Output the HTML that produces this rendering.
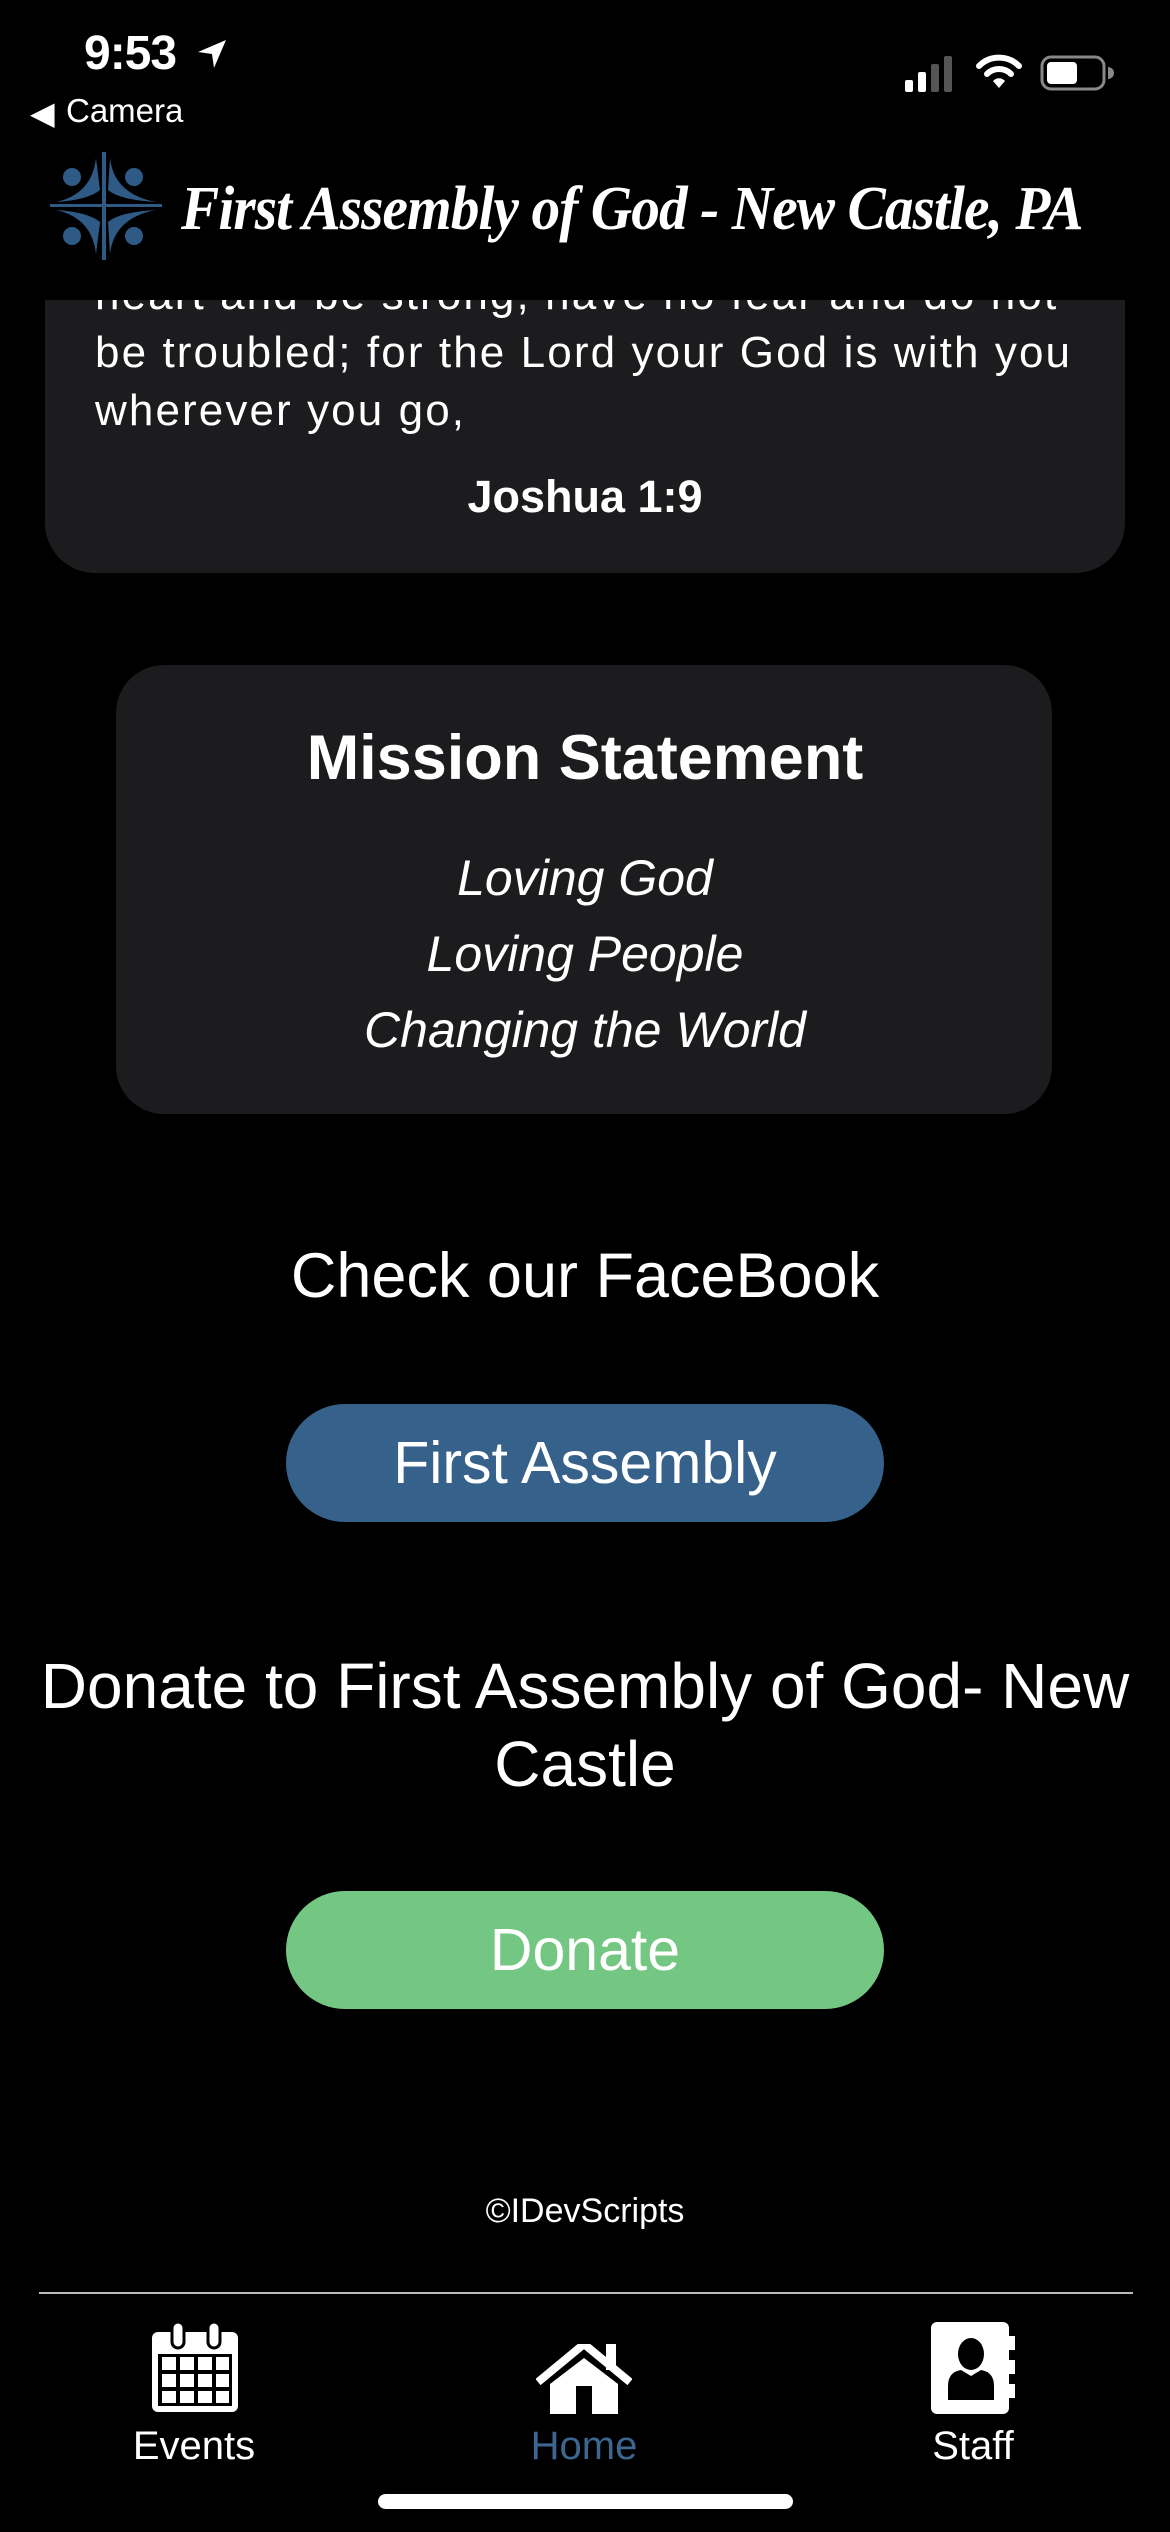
<!DOCTYPE html>
<html><head><meta charset="utf-8"><style>
*{margin:0;padding:0;box-sizing:border-box}
body{width:1170px;height:2532px;background:#000;color:#fff;font-family:"Liberation Sans",sans-serif;position:relative;overflow:hidden}
.a{position:absolute}
.c{position:absolute;left:0;width:1170px;text-align:center}
</style></head><body>
<div class="a" style="left:45px;top:200px;width:1080px;height:373px;background:#1c1c1e;border-radius:0 0 50px 50px"></div>
<div class="a" style="left:95px;top:266px;font-size:44px;line-height:58px;width:1060px;letter-spacing:2.1px;white-space:nowrap">heart and be strong; have no fear and do not<br>be troubled; for the Lord your God is with you<br>wherever you go,</div>
<div class="c" style="top:470px;font-size:45px;font-weight:bold;line-height:54px">Joshua 1:9</div>
<div class="a" style="left:0;top:0;width:1170px;height:300px;background:#000"></div>
<div class="a" style="left:84px;top:26px;font-size:48px;font-weight:bold;letter-spacing:-1px">9:53</div>
<svg class="a" style="left:196px;top:38px" width="32" height="32" viewBox="0 0 32 32"><path d="M30 2 L2 14 L16 16 L18 30 Z" fill="#fff"/></svg>
<div class="a" style="left:30px;top:94px;font-size:32px">&#9664;&#xFE0E;</div>
<div class="a" style="left:66px;top:92px;font-size:33px">Camera</div>
<svg class="a" style="left:905px;top:56px" width="50" height="36"><rect x="0" y="24" width="8" height="12" rx="2" fill="#fff"/><rect x="13" y="16" width="8" height="20" rx="2" fill="#fff"/><rect x="26" y="8" width="8" height="28" rx="2" fill="#555"/><rect x="39" y="0" width="8" height="36" rx="2" fill="#555"/></svg>
<svg class="a" style="left:976px;top:54px" width="46" height="36" viewBox="0 0 46 36"><path d="M3 12 A28 28 0 0 1 43 12" stroke="#fff" stroke-width="6" fill="none" stroke-linecap="round"/><path d="M11 20 A17 17 0 0 1 35 20" stroke="#fff" stroke-width="6" fill="none" stroke-linecap="round"/><path d="M17 27 L23 34 L29 27 A8 8 0 0 0 17 27Z" fill="#fff"/></svg>
<svg class="a" style="left:1040px;top:55px" width="74" height="36"><rect x="2" y="2" width="62" height="32" rx="9" stroke="#888" stroke-width="3" fill="none"/><rect x="7" y="7" width="30" height="22" rx="4" fill="#fff"/><path d="M68 12 v12 a5 5 0 0 0 0 -12z" fill="#888"/></svg>
<svg class="a" style="left:48px;top:150px" width="116" height="112" viewBox="0 0 116 112">
<g fill="#2e5a85">
<rect x="54" y="2" width="4" height="108"/>
<rect x="2" y="54" width="112" height="3"/>
<circle cx="24" cy="27" r="9"/><circle cx="86" cy="27" r="9"/><circle cx="24" cy="86" r="9"/><circle cx="86" cy="86" r="9"/>
<path d="M48 8 Q44 44 8 52 Q40 50 52 40Z"/><path d="M62 8 Q66 44 108 52 Q72 50 60 40Z"/>
<path d="M48 104 Q44 68 8 60 Q40 62 52 72Z"/><path d="M62 104 Q66 68 108 60 Q72 62 60 72Z"/>
</g></svg>
<div class="a" style="left:181px;top:174px;font-size:62px;font-family:'Liberation Serif',serif;font-style:italic;font-weight:bold;white-space:nowrap;transform:scaleX(0.925);transform-origin:left;letter-spacing:-1px">First Assembly of God - New Castle, PA</div>
<div class="a" style="left:116px;top:665px;width:936px;height:449px;background:#1c1c1e;border-radius:48px"></div>
<div class="c" style="top:722px;font-size:63px;font-weight:bold">Mission Statement</div>
<div class="c" style="top:840px;font-size:50px;font-style:italic;line-height:76px">Loving God<br>Loving People<br>Changing the World</div>
<div class="c" style="top:1240px;font-size:63px">Check our FaceBook</div>
<div class="a" style="left:286px;top:1404px;width:598px;height:118px;background:#36618a;border-radius:59px;text-align:center;line-height:118px;font-size:59px">First Assembly</div>
<div class="c" style="top:1647px;font-size:64px;line-height:78px">Donate to First Assembly of God- New<br>Castle</div>
<div class="a" style="left:286px;top:1891px;width:598px;height:118px;background:#74c683;border-radius:59px;text-align:center;line-height:118px;font-size:59px">Donate</div>
<div class="c" style="top:2192px;font-size:34px">©IDevScripts</div>
<div class="a" style="left:39px;top:2292px;width:1094px;height:2px;background:#bbb"></div>
<svg class="a" style="left:152px;top:2322px" width="86" height="90" viewBox="0 0 86 90"><rect x="0" y="10" width="86" height="80" rx="6" fill="#fff"/><rect x="20" y="0" width="12" height="26" rx="6" fill="#fff" stroke="#000" stroke-width="3"/><rect x="56" y="0" width="12" height="26" rx="6" fill="#fff" stroke="#000" stroke-width="3"/><g fill="#000"><rect x="6" y="32" width="74" height="52"/></g><g fill="#fff"><rect x="10" y="35" width="14" height="13"/><rect x="28" y="35" width="14" height="13"/><rect x="46" y="35" width="14" height="13"/><rect x="64" y="35" width="13" height="13"/><rect x="10" y="52" width="14" height="13"/><rect x="28" y="52" width="14" height="13"/><rect x="46" y="52" width="14" height="13"/><rect x="64" y="52" width="13" height="13"/><rect x="10" y="69" width="14" height="12"/><rect x="28" y="69" width="14" height="12"/><rect x="46" y="69" width="14" height="12"/><rect x="64" y="69" width="13" height="12"/></g></svg>
<svg class="a" style="left:536px;top:2344px" width="96" height="70" viewBox="0 0 96 70"><path d="M2 38 L48 0 L94 38" stroke="#fff" stroke-width="8" fill="none" stroke-linejoin="round"/><rect x="70" y="0" width="10" height="26" fill="#fff"/><path d="M14 40 L48 14 L82 40 V70 H56 V42 H40 V70 H14Z" fill="#fff"/></svg>
<svg class="a" style="left:931px;top:2322px" width="86" height="92" viewBox="0 0 86 92"><rect x="0" y="0" width="78" height="92" rx="6" fill="#fff"/><rect x="78" y="14" width="6" height="14" fill="#fff"/><rect x="78" y="38" width="6" height="14" fill="#fff"/><rect x="78" y="62" width="6" height="14" fill="#fff"/><ellipse cx="40" cy="32" rx="13" ry="16" fill="#000"/><path d="M17 78 V64 Q17 50 30 48 L40 54 L50 48 Q63 50 63 64 V78Z" fill="#000"/></svg>
<div class="a" style="left:94px;top:2424px;width:200px;text-align:center;font-size:40px">Events</div>
<div class="a" style="left:484px;top:2424px;width:200px;text-align:center;font-size:40px;color:#3d6690">Home</div>
<div class="a" style="left:873px;top:2424px;width:200px;text-align:center;font-size:40px">Staff</div>
<div class="a" style="left:378px;top:2494px;width:415px;height:15px;background:#fff;border-radius:8px"></div>
</body></html>
